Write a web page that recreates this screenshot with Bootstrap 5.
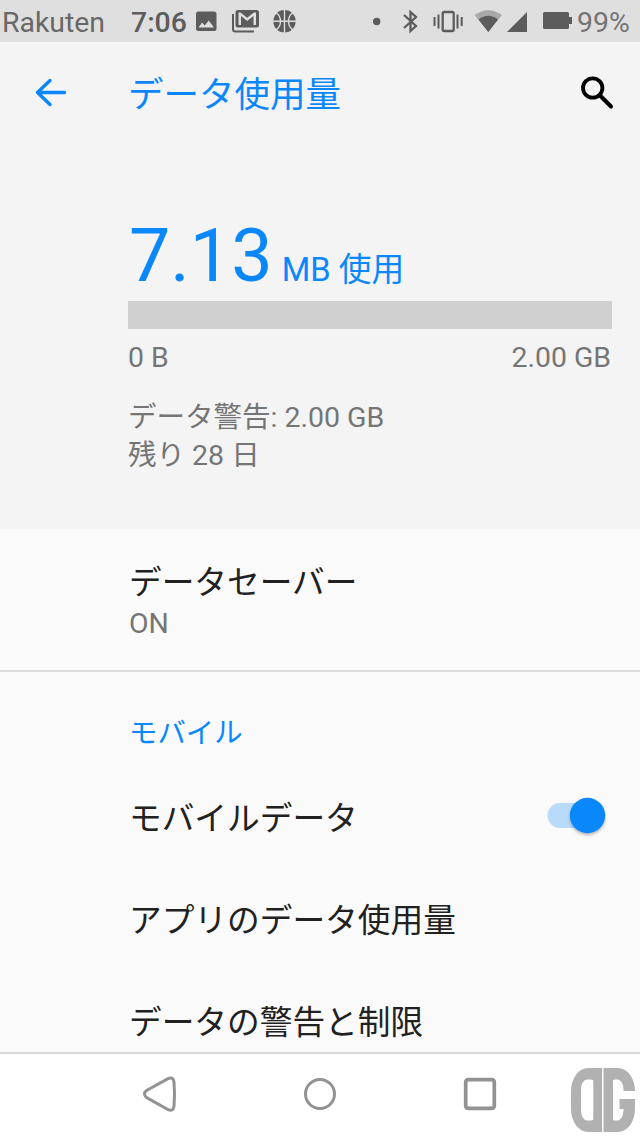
<!DOCTYPE html>
<html lang="ja">
<head>
<meta charset="utf-8">
<meta name="viewport" content="width=device-width, initial-scale=1">
<title>データ使用量</title>
<link href="https://cdn.jsdelivr.net/npm/bootstrap@5.3.0/dist/css/bootstrap.min.css" rel="stylesheet">
<style>
  body { font-family: Roboto, "Noto Sans CJK JP", sans-serif; background: #fafafa; color: #212121; height: 1137px; overflow: hidden; }
  .accent { color: #0a88fb; }
  .muted { color: #757575; }
  .status { height: 42px; background: #dfdfdf; color: #5c5c5c; font-size: 28.4px; line-height: 46px; padding-left: 2px; }
  .status svg { fill: #5c5c5c; flex: none; height: 42px; }
  .carrier { width: 129px; color: #686868; }
  .clock { width: 56px; font-weight: 500; white-space: nowrap; }
  .percent { width: 63px; color: #747474; white-space: nowrap; }
  .summary { height: 487px; background: #f4f4f4; }
  .appbar { height: 101px; }
  .back { width: 128px; padding-left: 32px; }
  .title { font-size: 35.5px; line-height: 40px; font-weight: 400; padding-top: 5px; }
  .find { margin: 0 26px 2px 0; }
  .usage { padding: 72px 28px 0 128px; }
  .amount { height: 86px; line-height: 82px; font-size: 73.6px; white-space: nowrap; padding-left: 1px; }
  .amount .unit { font-size: 32.7px; margin-left: -9px; }
  .meter { height: 28px; border-radius: 0; background: #d0d0d0; }
  .meter-labels { font-size: 28.4px; line-height: 38px; margin-top: 10px; padding-right: 1px; }
  .notes { font-size: 28.5px; line-height: 38px; margin-top: 22px; }
  .inset { padding-left: 129px; }
  .saver { height: 143px; border-bottom: 2px solid #dcdcdc; padding-top: 32px; }
  .entry { font-size: 32.7px; line-height: 44px; font-weight: 400; }
  .state { font-size: 28.4px; line-height: 38px; }
  .group-name { font-size: 28.4px; line-height: 40px; padding-top: 42px; height: 94px; }
  .entries { height: 286px; overflow: hidden; }
  .entry-row { height: 102px; padding-right: 34px; }
  .entry-row .entry { padding-top: 3px; }
  .entry-row svg { margin-bottom: 2px; }
  .navkeys { height: 85px; background: #fff; border-top: 2px solid #dadada; padding-left: 80px; }
  .navkeys svg { fill: none; stroke: #929292; flex: none; }
  .navkeys .emblem { fill: #b1b1b1; stroke: none; margin-left: 11px; }
</style>
</head>
<body>
<header class="status d-flex">
  <span class="carrier">Rakuten</span>
  <span class="clock">7:06</span>
  <svg width="39" viewBox="187 0 39 42"><path fill-rule="evenodd" d="M198.500 11.500h15.500q2.500 0 2.500 2.500v14.500q0 2.500-2.500 2.500h-15.500q-2.500 0-2.500-2.500v-14.500q0-2.500 2.500-2.500zM198.500 27.500h15.500l-5.300-7-3.900 5-2.700-3z"/></svg>
  <svg width="39" viewBox="226 0 39 42"><path fill-rule="evenodd" d="M238 10h18.500q2.500 0 2.500 2.500v12.500q0 2.500-2.500 2.500h-18.500q-2.500 0-2.500-2.500v-12.500q0-2.500 2.500-2.500zM238.500 25h2.500v-9l6.200 5 6.300-5v9h2.500v-12.500h-2l-6.800 5.200-6.700-5.200h-2z"/><path d="M233 14v15q0 2.500 2.500 2.500h18.500" fill="none" stroke="#5c5c5c" stroke-width="2"/></svg>
  <svg width="39" viewBox="265 0 39 42"><circle cx="284.500" cy="21.300" r="11.200"/><path d="M284.500 10v23M273 21.300h23M276.500 13q4 3 4 8.300t-4 8.300M292.500 13q-4 3-4 8.300t4 8.300" fill="none" stroke="#dfdfdf" stroke-width="1.400"/></svg>
  <svg class="ms-auto" width="33" viewBox="360 0 33 42"><circle cx="376.700" cy="21.500" r="3.700"/></svg>
  <svg width="34" viewBox="393 0 34 42"><path d="M404 15l12 11-5.500 5V12l5.500 5-12 11" fill="none" stroke="#5c5c5c" stroke-width="2.300"/></svg>
  <svg width="42" viewBox="427 0 42 42"><rect x="442.700" y="12" width="11" height="19" rx="1.500" fill="none" stroke="#5c5c5c" stroke-width="2.300"/><path d="M434.500 17v9M438.500 14.500v14M457.500 14.500v14M461.700 17v9" stroke="#5c5c5c" stroke-width="2"/></svg>
  <svg width="34" viewBox="469 0 34 42"><path fill="#a9a9a9" d="M474.500 15q13.800-9.500 27.500 0L488.300 32z"/><path d="M478.500 19.500q9.800-7.500 19.500 0L488.300 32z"/></svg>
  <svg width="32" viewBox="503 0 32 42"><path d="M507 32L527 12v20z"/></svg>
  <svg width="42" viewBox="535 0 42 42"><path d="M544.500 12h23q1.500 0 1.500 1.500v3.500h3v7h-3v3.500q0 1.500-1.500 1.500h-23q-1.500 0-1.500-1.500v-14q0-1.500 1.500-1.500z"/></svg>
  <span class="percent">99%</span>
</header>

<section class="summary">
  <div class="appbar d-flex align-items-center">
    <div class="back"><svg class="d-block" width="36" height="36" viewBox="0 0 36 36" fill="none" stroke="#0a88fb" stroke-width="3.400" stroke-linecap="round" stroke-linejoin="round"><path d="M32.500 17.500H5.500M18 5.500L5.500 17.500 18 29.500"/></svg></div>
    <h1 class="title accent mb-0 ps-1-px">データ使用量</h1>
    <svg class="find ms-auto" width="36" height="36" viewBox="578 74 36 36" fill="none" stroke="#000"><circle cx="592.700" cy="88" r="9.700" stroke-width="3.800"/><path d="M600 95.500l11 11" stroke-width="4" stroke-linecap="round"/></svg>
  </div>
  <div class="usage">
    <div class="amount accent">7.13 <span class="unit">MB 使用</span></div>
    <div class="meter progress"></div>
    <div class="meter-labels muted d-flex justify-content-between"><span>0 B</span><span>2.00 GB</span></div>
    <div class="notes muted">データ警告: 2.00 GB<br>残り 28 日</div>
  </div>
</section>

<main>
  <section class="saver inset">
    <div class="entry">データセーバー</div>
    <div class="state muted">ON</div>
  </section>
  <div class="group-name inset accent">モバイル</div>
  <div class="entries">
    <div class="entry-row inset d-flex align-items-center justify-content-between">
      <span class="entry">モバイルデータ</span>
      <svg width="60" height="46" viewBox="546 793 60 46"><rect x="547.500" y="803" width="52" height="25" rx="12.500" fill="#b9dbfb"/><circle cx="587.500" cy="815.500" r="17.700" fill="#0a88fb" style="filter:drop-shadow(0 2px 1.500px #0004)"/></svg>
    </div>
    <div class="entry-row inset d-flex align-items-center"><span class="entry">アプリのデータ使用量</span></div>
    <div class="entry-row inset d-flex align-items-center"><span class="entry">データの警告と制限</span></div>
  </div>
</main>

<nav class="navkeys d-flex">
  <svg width="160" height="83" viewBox="80 1054 160 83"><path d="M146.500 1090.500L168 1078.600q5.500-2 6 3.500 1 12 0 24-.500 5.500-6 3.500L146.500 1097.500q-4-3.500 0-7z" stroke-width="3"/></svg>
  <svg width="160" height="83" viewBox="240 1054 160 83"><circle cx="320" cy="1094" r="14.500" stroke-width="3"/></svg>
  <svg width="160" height="83" viewBox="400 1054 160 83"><rect x="465.700" y="1079.700" width="28.600" height="28.600" rx="2.500" stroke-width="3.700"/></svg>
  <svg class="emblem" width="65" height="83" viewBox="571 1054 65 83">
    <rect x="571" y="1068" width="64" height="64" rx="17" ry="23"/>
    <g fill="#fff">
      <rect x="581" y="1079.500" width="16" height="41" rx="6" ry="10"/>
      <rect x="609" y="1079.500" width="14.500" height="41" rx="6" ry="10"/>
      <rect x="613" y="1091" width="23" height="8"/>
    </g>
    <rect x="593.300" y="1072" width="19.700" height="56"/>
    <rect x="619.500" y="1099" width="15.500" height="10"/>
    <rect x="602" y="1068" width="1.500" height="64" fill="#fff"/>
  </svg>
</nav>
<script src="https://cdn.jsdelivr.net/npm/bootstrap@5.3.0/dist/js/bootstrap.bundle.min.js"></script>
</body>
</html>
